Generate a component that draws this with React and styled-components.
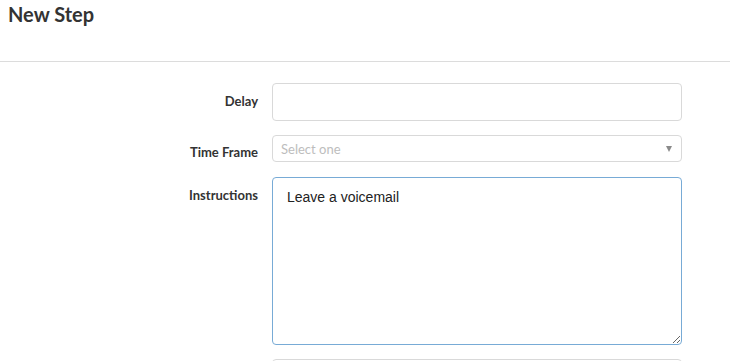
import React from "react";
import styled, { createGlobalStyle } from "styled-components";

const Global = createGlobalStyle`
  html, body { margin: 0; padding: 0; background: #fff; }
  body { font-family: Lato, "Liberation Sans", sans-serif; color: #333; overflow: hidden; }
  * { box-sizing: border-box; }
`;

const Header = styled.header`
  height: 62px;
  padding: 2px 8px 0;
  border-bottom: 1px solid #dcdcdc;
`;

const Title = styled.h1`
  margin: 0;
  font-family: Lato, sans-serif;
  font-weight: 700;
  font-size: 20px;
  line-height: 24px;
  color: #333;
`;

const Form = styled.form`
  display: grid;
  grid-template-columns: 258px 410px;
  column-gap: 14px;
  row-gap: 14px;
  padding-top: 21px;
`;

const Label = styled.label`
  text-align: right;
  font-family: Lato, sans-serif;
  font-weight: 700;
  font-size: 13px;
  line-height: 18px;
  padding-top: ${(p) => p.$pt ?? 9}px;
  color: #333;
`;

const Input = styled.input`
  display: block;
  width: 100%;
  height: ${(p) => p.$h ?? 38}px;
  border: 1px solid #d9d9d9;
  border-radius: 4px;
  background: #fff;
  outline: none;
  padding: 0 10px;
  font-family: "Liberation Sans", Arial, sans-serif;
  font-size: 14px;
`;

const SelectBox = styled.div`
  position: relative;
  display: flex;
  align-items: center;
  height: 27px;
  border: 1px solid #d9d9d9;
  border-radius: 4px;
  padding: 1px 8px 0;
  font-family: Lato, sans-serif;
  font-size: 13px;
  color: #bdbdbd;
`;

const Arrow = styled.span`
  position: absolute;
  right: 9px;
  top: 10px;
  width: 0;
  height: 0;
  border-left: 3.5px solid transparent;
  border-right: 3.5px solid transparent;
  border-top: 6px solid #8a8a8a;
`;

const TextArea = styled.textarea`
  display: block;
  width: 100%;
  height: 168px;
  margin-top: 1px;
  border: 1px solid #78abd6;
  border-radius: 4px;
  padding: 11px 14px;
  outline: none;
  font-family: "Liberation Sans", Arial, sans-serif;
  font-size: 14px;
  line-height: 16px;
  color: #222;
  resize: vertical;
`;

export default function App() {
  return (
    <>
      <Global />
      <Header>
        <Title>New Step</Title>
      </Header>
      <Form onSubmit={(e) => e.preventDefault()}>
        <Label>Delay</Label>
        <Input />
        <Label $pt={8}>Time Frame</Label>
        <SelectBox>
          Select one
          <Arrow />
        </SelectBox>
        <Label $pt={10}>Instructions</Label>
        <TextArea defaultValue="Leave a voicemail" />
        <Label />
        <Input />
      </Form>
    </>
  );
}
